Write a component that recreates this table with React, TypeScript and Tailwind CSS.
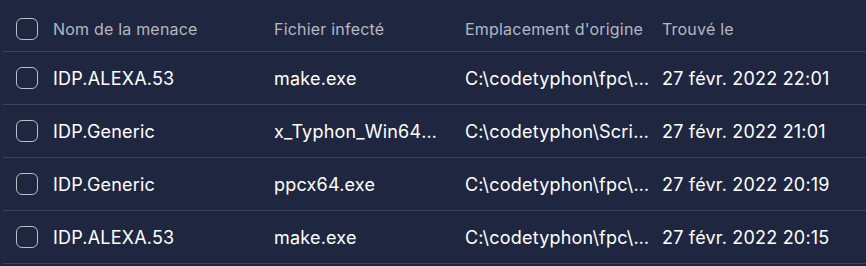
const rows = [
  { name: "IDP.ALEXA.53", file: "make.exe", path: "C:\\codetyphon\\fpc\\fpc64\\bin\\x86_64-win64\\make.exe", date: "27 févr. 2022 22:01" },
  { name: "IDP.Generic", file: "x_Typhon_Win64_Build.exe", path: "C:\\codetyphon\\ScriptsLinux\\x_Typhon_Win64_Build.exe", date: "27 févr. 2022 21:01" },
  { name: "IDP.Generic", file: "ppcx64.exe", path: "C:\\codetyphon\\fpc\\fpc64\\bin\\x86_64-win64\\ppcx64.exe", date: "27 févr. 2022 20:19" },
  { name: "IDP.ALEXA.53", file: "make.exe", path: "C:\\codetyphon\\fpc\\fpc32\\bin\\i386-win32\\make.exe", date: "27 févr. 2022 20:15" },
];

function Checkbox() {
  return <span className="block h-[22px] w-[22px] rounded-[6px] border-[1.5px] border-[#b9bdc7]" />;
}

export default function App() {
  return (
    <div className="h-[266px] w-[866px] overflow-hidden bg-[#1f2740] font-['Inter',sans-serif]">
      <div className="ml-[3px] grid h-[52px] grid-cols-[50px_221px_191px_197px_1fr] items-center border-b border-[#3b4358] pt-[6px] text-[16px] tracking-[0.2px] text-[#b3b8c3]">
        <div className="pl-[13px]">
          <Checkbox />
        </div>
        <div>Nom de la menace</div>
        <div>Fichier infecté</div>
        <div>Emplacement d'origine</div>
        <div>Trouvé le</div>
      </div>
      {rows.map((r, i) => (
        <div
          key={i}
          className="ml-[3px] grid h-[53px] grid-cols-[50px_221px_191px_197px_1fr] items-center border-b border-[#3b4358] text-[18px] tracking-[0.2px] text-white"
        >
          <div className="pl-[13px]">
            <Checkbox />
          </div>
          <div className="truncate pr-4">{r.name}</div>
          <div className="truncate pr-5">{r.file}</div>
          <div className="truncate pr-3">{r.path}</div>
          <div className="truncate">{r.date}</div>
        </div>
      ))}
    </div>
  );
}
